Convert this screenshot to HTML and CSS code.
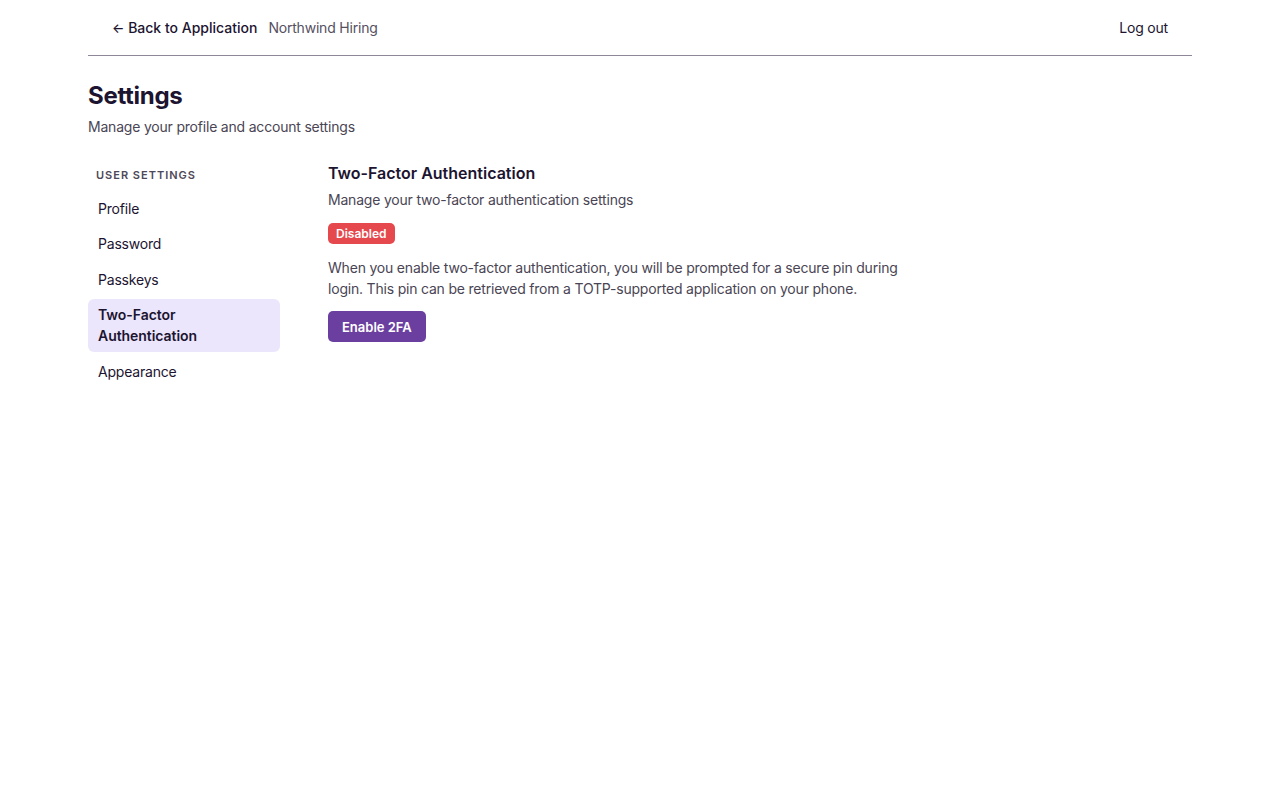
FILE: index.html
```html
<!DOCTYPE html>
<html lang="en">
<head>
<meta charset="utf-8">
<title>Settings</title>
<link rel="stylesheet" href="styles.css">
</head>
<body>
<div class="page">
  <header class="topbar">
    <div class="topbar-left">
      <a class="back-link" href="#"><span class="arrow">&larr;</span> Back to Application</a>
      <span class="org">Northwind Hiring</span>
    </div>
    <a class="logout" href="#">Log out</a>
  </header>

  <section class="intro">
    <h1>Settings</h1>
    <p>Manage your profile and account settings</p>
  </section>

  <div class="layout">
    <nav class="sidenav">
      <div class="nav-label">User Settings</div>
      <a class="nav-item" href="#">Profile</a>
      <a class="nav-item" href="#">Password</a>
      <a class="nav-item" href="#">Passkeys</a>
      <a class="nav-item active" href="#">Two-Factor Authentication</a>
      <a class="nav-item" href="#">Appearance</a>
    </nav>

    <main class="panel">
      <h2>Two-Factor Authentication</h2>
      <p class="panel-desc">Manage your two-factor authentication settings</p>
      <span class="badge">Disabled</span>
      <p class="panel-text">When you enable two-factor authentication, you will be prompted for a secure pin during login. This pin can be retrieved from a TOTP-supported application on your phone.</p>
      <button class="btn-primary" type="button">Enable 2FA</button>
    </main>
  </div>
</div>
</body>
</html>
```

FILE: styles.css
```css
* { box-sizing: border-box; }

body {
  margin: 0;
  font-family: Inter, "Noto Sans", sans-serif;
  color: #1c1430;
  background: #fff;
  letter-spacing: -0.2px;
  -webkit-font-smoothing: antialiased;
}

a { color: inherit; text-decoration: none; }

.page {
  width: 1104px;
  margin: 0 auto;
}

.topbar {
  height: 56px;
  display: flex;
  align-items: center;
  justify-content: space-between;
  padding: 0 24px;
  border-bottom: 1px solid #8d8799;
  font-size: 14px;
}

.topbar-left {
  display: flex;
  align-items: center;
  gap: 11px;
}

.back-link { font-weight: 500; color: #1c1430; letter-spacing: 0; }
.arrow { font-size: 13px; }
.org { color: #55505f; }
.logout { color: #1c1430; }

.intro { padding-top: 25px; }

.intro h1 {
  margin: 0;
  font-size: 24px;
  line-height: 30px;
  font-weight: 700;
  letter-spacing: -0.3px;
}

.intro p {
  margin: 6px 0 0;
  font-size: 14px;
  line-height: 20px;
  color: #4a4554;
}

.layout {
  display: flex;
  gap: 48px;
  padding-top: 25px;
}

.sidenav {
  width: 192px;
  flex: none;
  display: flex;
  flex-direction: column;
  gap: 3.5px;
  padding-top: 5px;
}

.nav-label {
  padding: 0 8px;
  font-size: 11px;
  line-height: 16px;
  font-weight: 600;
  letter-spacing: 1px;
  text-transform: uppercase;
  color: #4e4958;
  margin-bottom: 5.5px;
}

.nav-item {
  padding: 5.5px 10px;
  font-size: 14px;
  line-height: 21px;
  border-radius: 6px;
  color: #1c1430;
}

.nav-item.active {
  background: #ebe6fc;
  font-weight: 600;
  letter-spacing: -0.05px;
}

.panel {
  display: flex;
  flex-direction: column;
  align-items: flex-start;
}

.panel h2 {
  margin: 0;
  font-size: 16px;
  line-height: 22px;
  font-weight: 600;
  letter-spacing: 0;
}

.panel-desc {
  margin: 6px 0 0;
  font-size: 14px;
  line-height: 20px;
  color: #4a4554;
}

.badge {
  margin-top: 13px;
  padding: 0 8px;
  height: 21px;
  line-height: 21px;
  border-radius: 5px;
  background: #e5484d;
  color: #fff;
  font-size: 12px;
  font-weight: 600;
  letter-spacing: 0;
}

.panel-text {
  width: 600px;
  margin: 13px 0 0;
  font-size: 14px;
  line-height: 21px;
  color: #4a4554;
}

.btn-primary {
  margin-top: 12px;
  height: 31px;
  padding: 0 14px;
  border: 0;
  border-radius: 5px;
  background: #6b3fa0;
  color: #fff;
  font-family: inherit;
  font-size: 13px;
  font-weight: 600;
  letter-spacing: 0;
  cursor: pointer;
}
```
